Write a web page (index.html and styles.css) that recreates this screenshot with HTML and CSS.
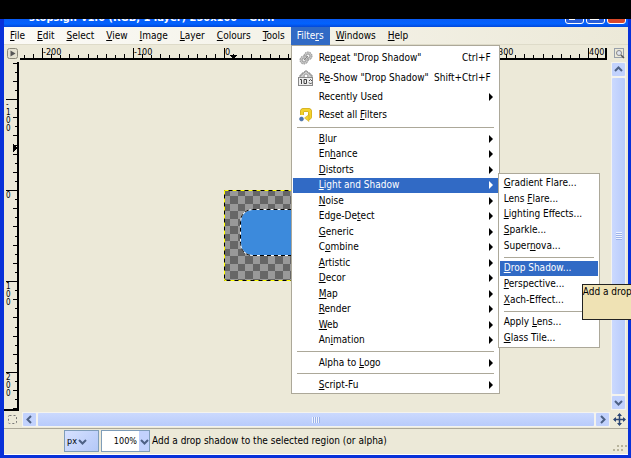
FILE: index.html
```html
<!DOCTYPE html>
<html lang="en">
<head>
    <meta charset="UTF-8">
    <meta name="viewport" content="width=device-width, initial-scale=1.0">
    <title>GIMP</title>
    <link rel="stylesheet" href="styles.css">
</head>
<body>
    <div class="window">
        <div class="titlebar">
            <span class="title-text">stopsign-v1.0 (RGB, 1 layer) 250x100 – GIMP</span>
            <button class="caption-btn" aria-label="Minimize"><span class="min-icon"></span></button>
            <button class="caption-btn" aria-label="Maximize"><span class="max-icon"></span></button>
            <button class="caption-btn close" aria-label="Close"></button>
        </div>

        <ul class="menubar">
            <li><button><u>F</u>ile</button></li>
            <li><button><u>E</u>dit</button></li>
            <li><button><u>S</u>elect</button></li>
            <li><button><u>V</u>iew</button></li>
            <li><button><u>I</u>mage</button></li>
            <li><button><u>L</u>ayer</button></li>
            <li><button><u>C</u>olours</button></li>
            <li><button><u>T</u>ools</button></li>
            <li class="open">
                <button>Filte<u>r</u>s</button>
                <div class="menu filters-menu">
                    <ul class="tall">
                        <li><button>
                            <svg class="icon" width="16" height="16" viewBox="0 0 16 16" fill="none">
                                <circle cx="10" cy="6" r="4" fill="#c8c8c8" stroke="#8a8a8a" stroke-dasharray="1.500 1"/>
                                <circle cx="10" cy="6" r="2" fill="#f2f2f2" stroke="#999"/>
                                <circle cx="6" cy="10" r="4" fill="#c8c8c8" stroke="#8a8a8a" stroke-dasharray="1.500 1"/>
                                <circle cx="6" cy="10" r="2" fill="#e8e8e8" stroke="#999"/>
                                <path d="M6 10l4-4" stroke="#888"/>
                            </svg>
                            <span>Re<u>p</u>eat "Drop Shadow"</span><kbd>Ctrl+F</kbd></button></li>
                        <li><button>
                            <svg class="icon" width="16" height="16" viewBox="0 0 16 16" fill="none">
                                <path d="M2 8V5l2 0V3l2 0 1-2h2l1 2h2v2h2v3z" fill="#d0d0d0" stroke="#888"/>
                                <circle cx="8" cy="6" r="2" fill="#fff" stroke="#999"/>
                                <rect x=".5" y="7.500" width="14" height="8" fill="#eee" stroke="#888"/>
                                <path d="M2 9.500h1.500V14M6 9.500h2.500v4H6zM11 11l1.500-1.500L14 11M11 12.500l1.500 1.500 1.500-1.500" stroke="#444"/>
                            </svg>
                            <span>R<u>e</u>-Show "Drop Shadow"</span><kbd>Shift+Ctrl+F</kbd></button></li>
                        <li class="short"><button class="sub"><span>Recently Used</span></button></li>
                        <li class="short"><button>
                            <svg class="icon" width="16" height="16" viewBox="0 0 16 16" fill="none">
                                <path d="M4 8V5q0-2 2-2h4q2 0 2 2v4q0 2-2 2" stroke="#c29b12" stroke-width="4"/>
                                <path d="M4 8V5q0-2 2-2h4q2 0 2 2v4q0 2-2 2" stroke="#f3d22e" stroke-width="3"/>
                                <path d="M11 7.500v7L6.500 11z" fill="#f3d22e" stroke="#c29b12" stroke-width=".5"/>
                                <circle cx="3.500" cy="12" r="2" fill="#4e78b4" stroke="#345c94" stroke-width=".5"/>
                            </svg>
                            <span>Reset all <u>F</u>ilters</span></button></li>
                    </ul>
                    <hr>
                    <ul class="rows-14">
                        <li><button class="sub"><span><u>B</u>lur</span></button></li>
                        <li><button class="sub"><span>En<u>h</u>ance</span></button></li>
                        <li><button class="sub"><span><u>D</u>istorts</span></button></li>
                        <li>
                            <button class="sub active"><span><u>L</u>ight and Shadow</span></button>
                            <div class="menu light-menu">
                                <ul class="rows-5">
                                    <li><button><span><u>G</u>radient Flare...</span></button></li>
                                    <li><button><span>Lens <u>F</u>lare...</span></button></li>
                                    <li><button><span><u>L</u>ighting Effects...</span></button></li>
                                    <li><button><span><u>S</u>parkle...</span></button></li>
                                    <li><button><span>Super<u>n</u>ova...</span></button></li>
                                </ul>
                                <hr>
                                <ul class="rows-3">
                                    <li>
                                        <button class="active"><span><u>D</u>rop Shadow...</span></button>
                                        <div class="tooltip" role="tooltip">Add a drop</div>
                                    </li>
                                    <li><button><span><u>P</u>erspective...</span></button></li>
                                    <li><button><span><u>X</u>ach-Effect...</span></button></li>
                                </ul>
                                <hr>
                                <ul class="rows-2">
                                    <li><button><span>Apply <u>L</u>ens...</span></button></li>
                                    <li><button><span><u>G</u>lass Tile...</span></button></li>
                                </ul>
                            </div>
                        </li>
                        <li><button class="sub"><span><u>N</u>oise</span></button></li>
                        <li><button class="sub"><span>Edge-De<u>t</u>ect</span></button></li>
                        <li><button class="sub"><span><u>G</u>eneric</span></button></li>
                        <li><button class="sub"><span>C<u>o</u>mbine</span></button></li>
                        <li><button class="sub"><span><u>A</u>rtistic</span></button></li>
                        <li><button class="sub"><span><u>D</u>ecor</span></button></li>
                        <li><button class="sub"><span><u>M</u>ap</span></button></li>
                        <li><button class="sub"><span><u>R</u>ender</span></button></li>
                        <li><button class="sub"><span><u>W</u>eb</span></button></li>
                        <li><button class="sub"><span>An<u>i</u>mation</span></button></li>
                    </ul>
                    <hr>
                    <ul>
                        <li><button class="sub"><span>Alpha to <u>L</u>ogo</span></button></li>
                    </ul>
                    <hr>
                    <ul>
                        <li><button class="sub"><span><u>S</u>cript-Fu</span></button></li>
                    </ul>
                </div>
            </li>
            <li><button><u>W</u>indows</button></li>
            <li><button><u>H</u>elp</button></li>
        </ul>

        <div class="workspace">
            <button class="corner" aria-label="Image menu">
                <svg width="11" height="11" viewBox="0 0 11 11">
                    <rect x=".5" y=".5" width="10" height="10" rx="2" fill="#e4e1d0" stroke="#8c8a7c"/>
                    <path d="M3.500 2.500v6l5-3z" fill="#555"/>
                </svg>
            </button>
            <svg class="ruler ruler-h" id="ruler-h"></svg>
            <button class="corner" aria-label="Zoom image when window size changes">
                <svg width="12" height="12" viewBox="0 0 12 12" fill="none">
                    <rect x="1.500" y="1.500" width="9" height="9" stroke="#44577e" stroke-dasharray="1 1"/>
                    <circle cx="6" cy="6" r="2.500" fill="#dfe4ee" stroke="#888"/>
                    <path d="M8 8l3 3" stroke="#555" stroke-width="1.500"/>
                </svg>
            </button>

            <svg class="ruler ruler-v" id="ruler-v"></svg>
            <div class="canvas">
                <svg class="picture" width="229" height="92">
                    <defs>
                        <pattern id="checks" x="-1" y="-1" width="15" height="15" patternUnits="userSpaceOnUse">
                            <rect width="15" height="15" fill="#999"/>
                            <path d="M0 0h7v7h8v8H7V7H0z" fill="#666"/>
                        </pattern>
                    </defs>
                    <rect width="229" height="91" fill="url(#checks)"/>
                    <rect x=".5" y=".5" width="228" height="90" fill="none" stroke="#000"/>
                    <rect x=".5" y=".5" width="228" height="90" fill="none" stroke="#ff0" stroke-dasharray="4 4"/>
                    <rect x="16.500" y="19.500" width="196" height="46" rx="12" fill="#3c8adc" stroke="#fff"/>
                    <rect x="16.500" y="19.500" width="196" height="46" rx="12" fill="none" stroke="#000" stroke-dasharray="4 3"/>
                </svg>
            </div>
            <div class="scrollbar vertical">
                <button aria-label="Scroll up"><svg width="9" height="9" viewBox="0 0 9 9"><path d="M1 6l3.500-3.500L8 6"/></svg></button>
                <div class="thumb"><i></i></div>
                <button aria-label="Scroll down"><svg width="9" height="9" viewBox="0 0 9 9"><path d="M1 3l3.500 3.500L8 3"/></svg></button>
            </div>

            <button class="corner" aria-label="Toggle quick mask">
                <svg width="11" height="11" viewBox="0 0 11 11" fill="none">
                    <rect x="1.500" y="1.500" width="8" height="8" rx="1" stroke="#777" stroke-dasharray="2 2"/>
                </svg>
            </button>
            <div class="scrollbar horizontal">
                <button aria-label="Scroll left"><svg width="9" height="9" viewBox="0 0 9 9"><path d="M6 1L2.500 4.500 6 8"/></svg></button>
                <div class="thumb"><i></i></div>
                <button aria-label="Scroll right"><svg width="9" height="9" viewBox="0 0 9 9"><path d="M3 1l3.500 3.500L3 8"/></svg></button>
            </div>
            <button class="corner" aria-label="Navigate the image">
                <svg width="13" height="13" viewBox="0 0 13 13">
                    <path d="M6.500 1v11M1 6.500h11" stroke="#2c4674" stroke-width="1.500"/>
                    <path d="M6.500 0L9 3H4zM6.500 13L4 10h5zM0 6.500L3 4v5zM13 6.500L10 9V4z" fill="#2c4674"/>
                </svg>
            </button>
        </div>

        <div class="statusbar">
            <label class="unit">
                <select aria-label="Unit"><option>px</option></select>
                <svg width="9" height="9" viewBox="0 0 9 9"><path d="M1 3l3.500 3.500L8 3"/></svg>
            </label>
            <div class="zoom">
                <input type="text" value="100%" aria-label="Zoom">
                <button aria-label="Zoom levels"><svg width="9" height="9" viewBox="0 0 9 9"><path d="M1 3l3.500 3.500L8 3"/></svg></button>
            </div>
            <span class="message">Add a drop shadow to the selected region (or alpha)</span>
            <svg class="grip" width="14" height="8" viewBox="0 0 14 8">
                <path d="M4 1h2v2H4zM8 1h2v2H8zM12 1h2v2h-2zM0 5h2v2H0zM4 5h2v2H4zM8 5h2v2H8z"/>
            </svg>
        </div>
    </div>
    <script src="script.js"></script>
</body>
</html>
```
FILE: styles.css
```css
:root {
    --face: #ece9d8;
    --highlight: #316ac5;
    --frame: #0831d9;
    --scroll: #c2d2fd;
    --arrow: #4d6185;
    --line: #aca899;
}

* {
    box-sizing: border-box;
}

body {
    margin: 0;
    padding-top: 19px;
    height: 100vh;
    display: flex;
    overflow: hidden;
    background: #000;
    color: #000;
    font-family: "DejaVu Sans Condensed", "DejaVu Sans", sans-serif;
    font-size: 10px;
    line-height: 14px;
}

ul {
    margin: 0;
    padding: 0;
    list-style: none;
}

button {
    margin: 0;
    padding: 0;
    border: none;
    background: none;
    color: inherit;
    font: inherit;
    white-space: nowrap;
}

u {
    text-underline-offset: 1px;
}

.window {
    flex: 1;
    min-width: 0;
    display: flex;
    flex-direction: column;
    background: var(--face);
    border: solid var(--frame);
    border-width: 0 3px 3px 4px;
}

/* title bar, its upper part is out of view */
.titlebar {
    height: 8px;
    display: flex;
    align-items: flex-end;
    gap: 2px;
    overflow: hidden;
    padding: 0 2px 3px 25px;
    background: linear-gradient(#0a5cf5, #0262fe 60%, #0347d8);
    color: #fff;
}

.title-text {
    flex: 1;
    font-size: 11px;
    font-weight: bold;
    line-height: 12px;
}

.caption-btn {
    width: 19px;
    height: 18px;
    display: flex;
    align-items: flex-end;
    padding: 3px;
    border: 1px solid #fff;
    border-radius: 3px;
    background: #2a5fd8;
}

.caption-btn.close {
    background: #d8482a;
}

.min-icon {
    width: 6px;
    height: 2px;
    background: #fff;
}

.max-icon {
    width: 9px;
    height: 8px;
    border: 1px solid #fff;
}

.menubar {
    height: 18px;
    display: flex;
    background: linear-gradient(90deg, #fbfaf6, var(--face));
    border-bottom: 1px solid #dedbc9;
}

.menubar > li {
    position: relative;
}

.menubar > li > button {
    height: 18px;
    padding: 0 6px;
}

.menubar > .open > button {
    background: var(--highlight);
    color: #fff;
}

/* drop-down menus */
.menu {
    position: absolute;
    z-index: 2;
    padding: 2px 1px 1px;
    background: #fff;
    border: 1px solid var(--line);
}

.filters-menu {
    top: 18px;
    left: 0;
    width: 209px;
}

.light-menu {
    top: -5px;
    left: 100%;
    z-index: 3;
    width: 102px;
}

.menu ul {
    display: grid;
    grid-auto-rows: 1fr;
}

.menu .tall {
    grid-template-rows: 20px 20px;
    grid-auto-rows: 18px;
}

.menu .rows-14 {
    min-height: 217px;
}

.menu .rows-5 {
    min-height: 78px;
}

.menu .rows-3 {
    min-height: 47px;
}

.menu .rows-2 {
    min-height: 31px;
}

.menu li {
    position: relative;
    min-height: 15px;
    display: flex;
}

.menu hr {
    height: 1px;
    margin: 3px 4px;
    border: none;
    background: var(--line);
}

.menu button {
    flex: 1;
    display: flex;
    align-items: center;
    padding: 0 7px 0 26px;
    text-align: left;
}

.light-menu button {
    padding: 0 4px;
}

.menu button.active {
    background: var(--highlight);
    color: #fff;
}

.menu .icon {
    flex: none;
    margin: 0 5px 0 -21px;
}

.menu kbd {
    margin-left: auto;
    font: inherit;
}

.menu .sub {
    padding-right: 5px;
}

.sub::after {
    content: "";
    margin-left: auto;
    border: solid transparent;
    border-width: 4px 0 4px 4px;
    border-left-color: currentColor;
}

/* runs up to the window's edge */
.tooltip {
    position: absolute;
    top: 23px;
    left: 82px;
    z-index: 4;
    width: 50px;
    height: 36px;
    background: #efe2b4;
    border: 1px solid #222;
    border-right: none;
    white-space: nowrap;
}

/* rulers, canvas and scrollbars */
.workspace {
    flex: 1;
    min-height: 0;
    display: grid;
    grid-template-columns: 16px minmax(0, 1fr) 18px;
    grid-template-rows: 16px minmax(0, 1fr) 17px;
}

.corner {
    display: grid;
    place-items: center;
}

.ruler {
    width: 100%;
    height: 100%;
    min-height: 0;
    font-size: 9px;
    shape-rendering: crispEdges;
}

.ruler-v {
    font-size: 8px;
}

.canvas {
    position: relative;
    overflow: hidden;
}

.picture {
    position: absolute;
    left: 204px;
    top: 129px;
}

.scrollbar {
    display: flex;
    gap: 2px;
    padding: 1px;
    background: #f4f3ee;
}

.scrollbar.vertical {
    flex-direction: column;
    margin: 1px 2px 1px 1px;
}

.scrollbar.horizontal {
    margin: 1px 0 1px 2px;
}

.scrollbar button {
    flex: none;
    width: 13px;
    height: 13px;
    display: grid;
    place-items: center;
    border-radius: 1px;
    background: var(--scroll);
}

.scrollbar svg, .statusbar svg {
    fill: none;
    stroke: var(--arrow);
    stroke-width: 2;
}

.thumb {
    flex: 1;
    display: grid;
    place-items: center;
    border-radius: 1px;
    background: linear-gradient(#cbd9fe, #b8cbfb);
}

.vertical .thumb {
    background: linear-gradient(90deg, #cbd9fe, #b8cbfb);
}

.thumb i {
    width: 8px;
    height: 6px;
    background: repeating-linear-gradient(90deg, #eef3ff 0 1px, #9cb2e8 1px 2px);
}

.vertical .thumb i {
    width: 6px;
    height: 8px;
    background: repeating-linear-gradient(#eef3ff 0 1px, #9cb2e8 1px 2px);
}

.statusbar {
    display: flex;
    align-items: center;
    gap: 2px;
    padding: 1px 1px 2px 60px;
    border-top: 1px solid var(--line);
    border-bottom: 1px solid #fff;
}

.unit, .zoom {
    height: 22px;
    display: flex;
    align-items: center;
    border: 1px solid #7f9db9;
}

.unit {
    position: relative;
    width: 35px;
    background: linear-gradient(135deg, #d6e1ff, #b4c8f8);
}

.unit select {
    width: 100%;
    padding: 0 0 0 2px;
    appearance: none;
    border: none;
    background: none;
    font: inherit;
    font-size: 9px;
}

.unit svg {
    position: absolute;
    left: 13px;
    pointer-events: none;
}

.zoom {
    width: 49px;
    background: #fff;
}

.zoom input {
    flex: 1;
    min-width: 0;
    padding: 0 2px;
    border: none;
    background: none;
    font: inherit;
    font-size: 9px;
    text-align: right;
}

.zoom button {
    width: 10px;
    height: 100%;
    display: grid;
    place-items: center;
    background: var(--scroll);
}

.message {
    flex: 1;
    white-space: nowrap;
}

.statusbar .grip {
    align-self: flex-end;
    fill: #b8b49c;
    stroke: none;
}
```
FILE: script.js
```js
const SVG = 'http://www.w3.org/2000/svg';
const SCALE = 0.91; // screen pixels per image pixel

function add(parent, name, attrs, text) {
    const el = document.createElementNS(SVG, name);
    for (const key in attrs) el.setAttribute(key, attrs[key]);
    if (text) el.textContent = text;
    parent.appendChild(el);
}

function drawHorizontal(svg, zero) {
    const width = svg.clientWidth - 4;
    // labels under the open menu are left out
    const menu = document.querySelector('.filters-menu').getBoundingClientRect();
    const left = svg.getBoundingClientRect().left;
    add(svg, 'path', { d: `M0 14h${width}V3`, fill: 'none', stroke: '#000', 'stroke-width': 2 });
    for (let v = -220; v < 1000; v += 10) {
        const x = Math.round(zero + v * SCALE);
        if (x < 1 || x > width) continue;
        const len = v % 100 === 0 ? 11 : v % 20 === 0 ? 4 : 5;
        add(svg, 'rect', { x: x, y: 14 - len, width: 1, height: len });
        const covered = left + x > menu.left && left + x < menu.right - 5;
        if (v % 100 === 0 && !covered) {
            add(svg, 'text', { x: x + 1, y: 10 }, String(v));
        }
    }
    // pointer position
    add(svg, 'path', { d: `M${zero + 5} 10h8l-4 4z` });
}

function drawVertical(svg, zero) {
    const height = svg.clientHeight - 1;
    add(svg, 'path', { d: `M14 1v${height - 1}H0`, fill: 'none', stroke: '#000', 'stroke-width': 2 });
    for (let v = -140; v < 1000; v += 10) {
        const y = Math.round(zero + v * SCALE);
        if (y < 1 || y > height) continue;
        const len = v % 100 === 0 ? 12 : v % 20 === 0 ? 5 : 3;
        add(svg, 'rect', { x: 14 - len, y: y, width: len, height: 1 });
        if (v % 100 === 0) {
            String(v).split('').forEach((digit, i) => {
                add(svg, 'text', { x: 2, y: y + 8 + i * 8 }, digit);
            });
        }
    }
    add(svg, 'path', { d: `M9 ${zero - 46}v8l5-4z` });
}

drawHorizontal(document.getElementById('ruler-h'), 204);
drawVertical(document.getElementById('ruler-v'), 129);
```
